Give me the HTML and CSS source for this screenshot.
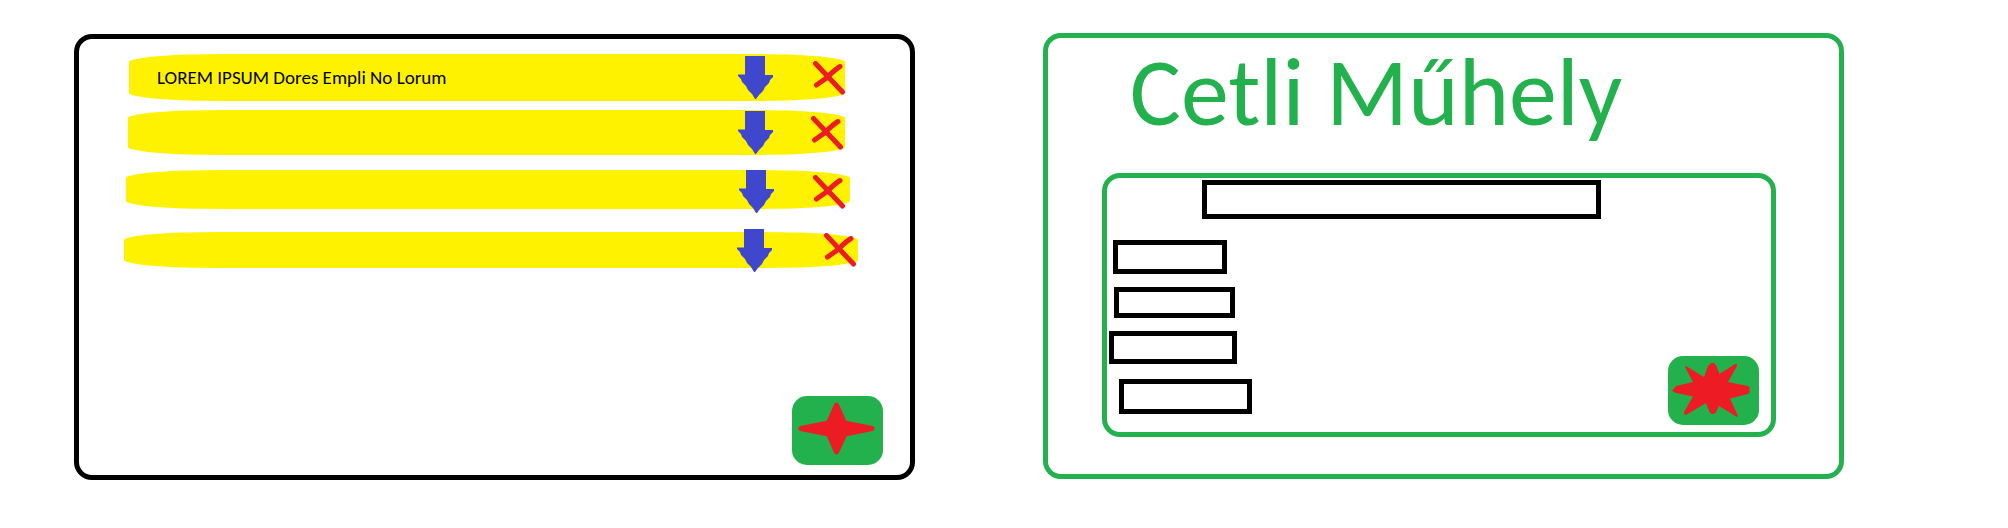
FILE: index.html
```html
<!DOCTYPE html>
<html lang="hu">
<head>
<meta charset="utf-8">
<title>Cetli Műhely</title>
<link rel="stylesheet" href="styles.css">
</head>
<body>
<svg class="defs" aria-hidden="true">
  <symbol id="arrow" viewBox="0 0 35 43"><path fill="#3f48cc" d="M7 0h20v19h8v2l-3 3-1 3-4 4-2 4-4 4-3 4h-1l-3-5-4-4-2-4-4-4-1-3-3-3v-1.500h7z"/></symbol>
  <symbol id="cross" viewBox="0 0 32 34"><path fill="none" stroke="#ed1c24" stroke-width="5" stroke-linecap="round" d="M2.500 2.500l27 28.500M27 5.500C21 9 17 14 12 18L3.500 24"/></symbol>
</svg>
<main class="page">
  <section class="board">
    <ul class="notes">
      <li class="note note-first">
        <span class="note-text">LOREM IPSUM Dores Empli No Lorum</span>
        <button class="icon-button" type="button" aria-label="Le"><svg width="35" height="43"><use href="#arrow"/></svg></button>
        <button class="icon-button" type="button" aria-label="Törlés"><svg width="32" height="34"><use href="#cross"/></svg></button>
      </li>
      <li class="note note-second">
        <span class="note-text"></span>
        <button class="icon-button" type="button" aria-label="Le"><svg width="35" height="43"><use href="#arrow"/></svg></button>
        <button class="icon-button" type="button" aria-label="Törlés"><svg width="32" height="34"><use href="#cross"/></svg></button>
      </li>
      <li class="note note-third">
        <span class="note-text"></span>
        <button class="icon-button" type="button" aria-label="Le"><svg width="35" height="43"><use href="#arrow"/></svg></button>
        <button class="icon-button" type="button" aria-label="Törlés"><svg width="32" height="34"><use href="#cross"/></svg></button>
      </li>
      <li class="note note-fourth">
        <span class="note-text"></span>
        <button class="icon-button" type="button" aria-label="Le"><svg width="35" height="43"><use href="#arrow"/></svg></button>
        <button class="icon-button" type="button" aria-label="Törlés"><svg width="32" height="34"><use href="#cross"/></svg></button>
      </li>
    </ul>
    <button class="star-button board-add" type="button" aria-label="Új cetli">
      <svg width="91" height="69" viewBox="0 0 91 69"><path class="star" d="M44.500 9L52.500 27 80 32.500 53 38 44.500 56 36.500 38 9 32.500 36.500 27z"/></svg>
    </button>
  </section>
  <section class="workshop">
    <h1 class="title">Cetli Műhely</h1>
    <form class="editor">
      <input class="field field-name" type="text" aria-label="Cím">
      <div class="editor-body">
        <div class="fields">
          <input class="field field-one" type="text" aria-label="Első mező">
          <input class="field field-two" type="text" aria-label="Második mező">
          <input class="field field-three" type="text" aria-label="Harmadik mező">
          <input class="field field-four" type="text" aria-label="Negyedik mező">
        </div>
        <button class="star-button" type="button" aria-label="Mentés">
          <svg width="91" height="69" viewBox="0 0 91 69"><path fill="#ed1c24" d="M43 7h3l2 2 3.500 9L67 8h2v2l-9 16 20 4 2 2-1 2 1 2-2 2-18 4.500 8 17.500-1 1-18-11-3.500 7-2 1h-2l-2-2-3.500-9L18 59l-2-1v-2l9-15.500L8 37l-4-2 4-5 17-4-8-15 1-1 18 11 4-11z"/></svg>
        </button>
      </div>
    </form>
  </section>
</main>
</body>
</html>
```

FILE: styles.css
```css
* {
  box-sizing: border-box;
}

body {
  margin: 0;
  background: #fff;
  color: #000;
  font-family: Calibri, Carlito, Lato, sans-serif;
}

.defs {
  position: absolute;
  width: 0;
  height: 0;
}

.page {
  display: flex;
  gap: 128px;
  min-height: 100vh;
}

.board,
.workshop {
  display: flex;
  flex-direction: column;
  border: 5px solid #000;
  border-radius: 18px;
}

.board {
  flex: 841 1 0;
  margin: 34px 0 48px 74px;
}

.workshop {
  flex: 801 1 0;
  margin: 33px 164px 49px 0;
  border-color: #22b14c;
}

.notes {
  margin: 0;
  padding: 15px 0 0;
  list-style: none;
}

.note {
  display: flex;
  align-items: center;
  background: #fff200;
  border-radius: 96px / 8px;
}

.note-first {
  height: 47px;
  margin: 0 65px 9px 50px;
  gap: 40px;
}

.note-second {
  height: 45px;
  margin: 0 65px 15px 49px;
  padding-right: 2px;
  gap: 38px;
}

.note-third {
  height: 39px;
  margin: 0 60px 23px 47px;
  padding: 4px 5px 0 0;
  gap: 39px;
}

.note-fourth {
  height: 36px;
  margin: 0 52px 0 45px;
  padding-right: 2px;
  gap: 52px;
}

.note-text {
  flex: 1;
  padding-left: 28px;
  font-size: 19px;
  line-height: 24px;
}

.icon-button {
  flex: none;
  padding: 0;
  border: 0;
  background: none;
}

.icon-button svg,
.star-button svg {
  display: block;
}

.star-button {
  flex: none;
  padding: 0;
  border: 0;
  border-radius: 15px;
  background: #22b14c;
}

.star {
  fill: #ed1c24;
  stroke: #ed1c24;
  stroke-width: 5px;
  stroke-linejoin: round;
}

.board-add {
  align-self: flex-end;
  margin: auto 27px 10px 0;
}

.title {
  margin: 0;
  padding: 6px 0 31px 82px;
  color: #22b14c;
  font-size: 96px;
  font-weight: 400;
  line-height: 98px;
}

.editor {
  display: flex;
  flex: 1;
  flex-direction: column;
  margin: 0 63px 37px 54px;
  padding: 2px 12px 7px 2px;
  border: 5px solid #22b14c;
  border-radius: 18px;
}

.editor-body {
  display: flex;
  flex: 1;
  align-items: flex-end;
  justify-content: space-between;
}

.fields {
  display: flex;
  flex-direction: column;
  align-self: flex-start;
}

.field {
  padding: 0 4px;
  border: 5px solid #000;
  border-radius: 0;
  background: #fff;
  font: inherit;
}

.field-name {
  height: 39px;
  margin: 0 158px 21px 93px;
}

.field-one {
  width: 114px;
  height: 34px;
  margin: 0 0 13px 4px;
}

.field-two {
  width: 121px;
  height: 31px;
  margin: 0 0 13px 5px;
}

.field-three {
  width: 128px;
  height: 33px;
  margin: 0 0 15px;
}

.field-four {
  width: 133px;
  height: 35px;
  margin: 0 0 0 10px;
}
```
